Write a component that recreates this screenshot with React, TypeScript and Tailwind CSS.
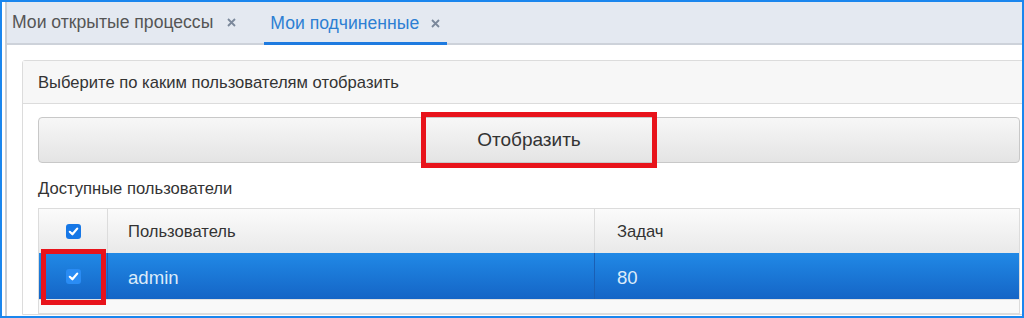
import React from 'react'

function CloseIcon() {
  return (
    <svg width="9" height="9" viewBox="0 0 9 9" className="shrink-0">
      <path d="M1 1 8 8M8 1 1 8" stroke="#7b889b" strokeWidth="1.8" />
    </svg>
  )
}

function CheckBox({ inRow }: { inRow?: boolean }) {
  return (
    <svg width="15" height="15" viewBox="0 0 15 15">
      <rect width="15" height="15" rx="3" fill={inRow ? '#2a8cf4' : '#1677e6'} />
      <path
        d="M3.8 7.8 6.4 10.3 11.2 4.6"
        fill="none"
        stroke="#fff"
        strokeWidth="2.2"
        strokeLinecap="round"
        strokeLinejoin="round"
      />
    </svg>
  )
}

export default function App() {
  return (
    <div className="relative w-[1024px] h-[318px] border-2 border-[#1a86ee] bg-white overflow-hidden flex font-['Liberation_Sans',Arial,sans-serif]">
      <div className="w-[3px] shrink-0" />
      <div className="flex-1 min-w-0 border-l-2 border-[#c9cdd3] flex flex-col">
        {/* Tabs */}
        <div className="h-[43px] shrink-0 bg-[#e4e9f1] border-b-2 border-[#cdd2da] flex">
          <div className="flex items-center px-[5px] text-[17.6px] text-[#555]">
            <span>Мои открытые процессы</span>
            <span className="ml-[14px] mr-[1px]"><CloseIcon /></span>
          </div>
          <div className="ml-[22px] flex items-center px-[6px] text-[17.6px] text-[#2d7fd3] border-b-[3px] border-[#1e7be0] mb-[-2px] pt-[3px]">
            <span>Мои подчиненные</span>
            <span className="ml-[12px] mr-[1px]"><CloseIcon /></span>
          </div>
        </div>

        {/* Content */}
        <div className="flex-1 pl-[15px] pt-[15px]">
          <div className="w-[1014px] border border-[#dcdcdc] rounded-tl-[3px]">
            <div className="h-[43px] bg-[#f7f7f7] border-b border-[#dcdcdc] flex items-center px-[15px] pt-[3px] text-[16.6px] text-[#333]">
              Выберите по каким пользователям отобразить
            </div>
            <div className="px-[15px] pt-[13px]">
              <button className="w-full h-[46px] rounded-[4px] border border-[#c8c8c8] bg-gradient-to-b from-[#f7f7f7] to-[#e4e4e4] text-[19px] text-[#333]">
                Отобразить
              </button>
              <div className="mt-[14px] h-[22px] flex items-center pt-[3px] text-[16.6px] text-[#333]">
                Доступные пользователи
              </div>
              <div className="mt-[9px] border border-[#dcdcdc]">
                <div className="h-[44px] flex bg-gradient-to-b from-[#fbfbfb] to-[#e9e9e9] text-[16.6px] text-[#333]">
                  <div className="w-[69px] shrink-0 border-r border-[#dcdcdc] flex items-center justify-center">
                    <CheckBox />
                  </div>
                  <div className="w-[487px] shrink-0 border-r border-[#dcdcdc] flex items-center pl-[20px] pt-[2px]">
                    Пользователь
                  </div>
                  <div className="flex-1 flex items-center pl-[22px] pt-[2px]">Задач</div>
                </div>
                <div className="h-[46px] flex bg-gradient-to-b from-[#2189e6] to-[#1565c6] text-[18.6px] text-[#dcebfa]">
                  <div className="w-[69px] shrink-0 border-r border-[#1a5fb4] flex items-center justify-center">
                    <CheckBox inRow />
                  </div>
                  <div className="w-[487px] shrink-0 border-r border-[#1a5fb4] flex items-center pl-[20px] pt-[3px]">
                    admin
                  </div>
                  <div className="flex-1 flex items-center pl-[22px] pt-[3px]">80</div>
                </div>
                <div className="h-[14px] bg-[#f9f9f9] border-t border-[#e2e2e2]" />
              </div>
            </div>
          </div>
        </div>
      </div>

      {/* Annotation frames */}
      <div className="absolute left-[419px] top-[110px] w-[236px] h-[56px] border-[5px] border-[#e8131b]" />
      <div className="absolute left-[39px] top-[247px] w-[65px] h-[56px] border-[5px] border-[#e8131b]" />
    </div>
  )
}
